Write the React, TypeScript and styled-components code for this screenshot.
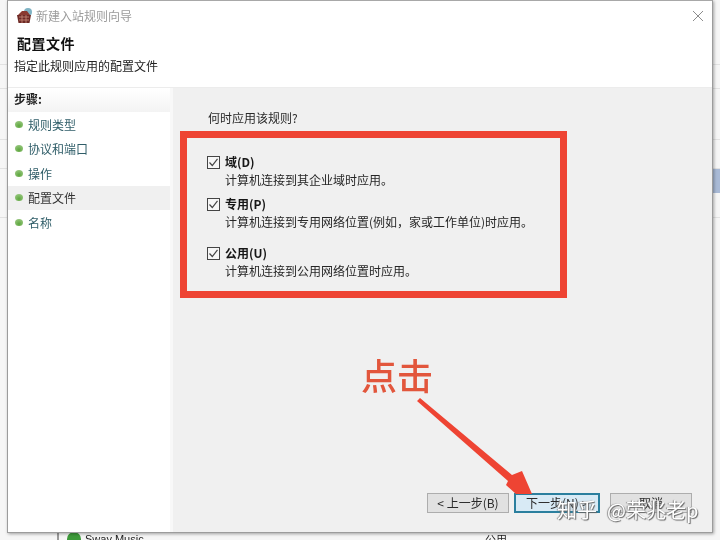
import React from "react";
import styled, { createGlobalStyle } from "styled-components";

const Global = createGlobalStyle`
  html, body { margin: 0; padding: 0; background: #f5f5f5; }
  * { box-sizing: border-box; }
`;

const Page = styled.div`
  position: relative;
  width: 720px;
  height: 540px;
  overflow: hidden;
  background: #f6f6f6;
  font-family: "Noto Sans CJK SC", "Liberation Sans", sans-serif;
  color: #1c1c1c;
  filter: blur(0.35px);
`;

const BackdropRows = styled.div`
  display: flex;
  flex-direction: column;
  align-items: stretch;
  padding-top: 41px;
`;

const BackdropRow = styled.div<{ $selected?: boolean; $height: number }>`
  height: ${(p) => p.$height}px;
  margin-left: ${(p) => (p.$selected ? 700 : 0)}px;
  background: ${(p) => (p.$selected ? "#a9bad6" : "transparent")};
  border-bottom: ${(p) => (p.$selected ? "none" : "1px solid #e2e2e2")};
`;

const BackdropFooter = styled.div`
  position: absolute;
  left: 57px;
  right: 0;
  bottom: 0;
  height: 8px;
  display: flex;
  align-items: flex-start;
  border-left: 2px solid #9a9a9a;
  padding-left: 8px;
  font-size: 11px;
  line-height: 14px;
  overflow: hidden;
`;

const FooterDot = styled.span`
  width: 14px;
  height: 14px;
  flex: none;
  margin-right: 4px;
  border-radius: 50%;
  background: #3d9a3a;
`;

const FooterName = styled.span`
  font-family: "Liberation Sans", sans-serif;
  width: 400px;
`;

const FooterProfile = styled.span`
  width: 60px;
`;

const Dialog = styled.div`
  position: absolute;
  left: 7px;
  top: 0;
  width: 706px;
  height: 533px;
  display: flex;
  flex-direction: column;
  background: #fff;
  border: 1px solid #9c9c9c;
  border-top-color: #a8a8a8;
  box-shadow: 1px 1px 3px rgba(0, 0, 0, 0.35);
`;

const Header = styled.header`
  height: 87px;
  flex: none;
  display: flex;
  flex-direction: column;
  padding: 0 8px 0 6px;
  background: #fff;
  border-bottom: 1px solid #ececec;
`;

const TitleBar = styled.div`
  height: 29px;
  display: flex;
  align-items: center;
  gap: 2px;
  padding-left: 2px;
`;

const TitleText = styled.span`
  font-size: 12px;
  color: #9c9c9c;
  flex: 1;
`;

const HeaderTitle = styled.h1`
  margin: 3px 0 0 3px;
  font-size: 14px;
  line-height: 20px;
  font-weight: 700;
  color: #111;
  letter-spacing: 0.5px;
`;

const HeaderSub = styled.p`
  margin: 4px 0 0;
  font-size: 12px;
  line-height: 18px;
  color: #222;
`;

const Body = styled.div`
  flex: 1;
  display: flex;
  min-height: 0;
`;

const Sidebar = styled.nav`
  width: 162px;
  flex: none;
  background: #fff;
  display: flex;
  flex-direction: column;
`;

const StepsHeading = styled.div`
  height: 24px;
  padding-left: 6px;
  font-size: 12px;
  line-height: 21px;
  font-weight: 700;
  color: #222;
  background: linear-gradient(#ffffff, #f3f3f3);
`;

const StepRow = styled.div<{ $current?: boolean }>`
  height: 24.5px;
  display: flex;
  align-items: center;
  gap: 5px;
  padding-left: 7px;
  font-size: 12px;
  background: ${(p) => (p.$current ? "#f0f0f0" : "transparent")};
  color: ${(p) => (p.$current ? "#333" : "#2f5d68")};
`;

const StepDot = styled.span`
  width: 8px;
  height: 7px;
  border-radius: 50%;
  flex: none;
  background: radial-gradient(circle at 50% 70%, #5da63e, #a5cf8e);
`;

const Divider = styled.div`
  width: 3px;
  flex: none;
  background: #f8f8f8;
`;

const Main = styled.main`
  flex: 1;
  position: relative;
  background: #f0f0f0;
  padding: 21px 0 0 7px;
`;

const Question = styled.div`
  margin-left: 28px;
  font-size: 12px;
  line-height: 18px;
  color: #2a2a2a;
`;

const RedFrame = styled.section`
  width: 387px;
  height: 167px;
  margin-top: 4px;
  border: 7px solid #ee4433;
  display: flex;
  flex-direction: column;
  padding: 15px 0 0 20px;
`;

const Option = styled.div<{ $gap?: number }>`
  display: grid;
  grid-template-columns: 13px 1fr;
  column-gap: 5px;
  margin-top: ${(p) => p.$gap ?? 0}px;
`;

const Check = styled.span`
  width: 13px;
  height: 13px;
  margin-top: 3px;
  border: 1px solid #444;
  background: #f6f6f6;
  display: flex;
  align-items: center;
  justify-content: center;
`;

const OptionText = styled.div`
  display: flex;
  flex-direction: column;
`;

const OptionLabel = styled.span`
  font-size: 12px;
  line-height: 18px;
  font-weight: 700;
  color: #161616;
`;

const OptionHelp = styled.span`
  font-size: 12px;
  line-height: 18px;
  color: #262626;
  white-space: nowrap;
`;

const Buttons = styled.div`
  position: absolute;
  right: 20px;
  bottom: 19px;
  display: flex;
  gap: 5px;
`;

const WizardButton = styled.button<{ $primary?: boolean; $apart?: boolean }>`
  width: ${(p) => (p.$primary ? 86 : 82)}px;
  height: 20px;
  margin-left: ${(p) => (p.$apart ? 5 : 0)}px;
  padding: 0;
  font-family: inherit;
  font-size: 12px;
  line-height: 16px;
  color: #2a2a2a;
  background: ${(p) => (p.$primary ? "#d8eaf5" : "#e1e1e1")};
  border: ${(p) => (p.$primary ? "2px solid #2b7f9e" : "1px solid #adadad")};
`;

const ClickLabel = styled.div`
  position: absolute;
  left: 361px;
  top: 348px;
  font-size: 36px;
  line-height: 52px;
  font-weight: 500;
  color: #e2563c;
`;

const ArrowLayer = styled.svg`
  position: absolute;
  left: 0;
  top: 0;
  pointer-events: none;
`;

const Watermark = styled.div`
  position: absolute;
  left: 557px;
  top: 497px;
  display: flex;
  gap: 10px;
  font-size: 20px;
  line-height: 26px;
  color: #fff;
  white-space: nowrap;
  text-shadow: 1px 1px 1px #666, -1px 0 1px #888;
`;

const steps = ["规则类型", "协议和端口", "操作", "配置文件", "名称"];

const options = [
  { label: "域(D)", help: "计算机连接到其企业域时应用。", gap: 0 },
  { label: "专用(P)", help: "计算机连接到专用网络位置(例如\uFF0C家或工作单位)时应用。", gap: 6 },
  { label: "公用(U)", help: "计算机连接到公用网络位置时应用。", gap: 13 },
];

const backdropRows = [
  { height: 24 },
  { height: 24 },
  { height: 51 },
  { height: 29 },
  { height: 24, selected: true },
  { height: 25 },
];

function WizardIcon() {
  return (
    <svg width="18" height="18" viewBox="0 0 18 18">
      <circle cx="12" cy="5" r="4" fill="#7fb3c4" />
      <path d="M2 8 L6 4 L11 4 L14 8 Z" fill="#8a3a30" />
      <path d="M1 8 H15 L13.5 16 H2.5 Z" fill="#6e2a26" />
      <path d="M3 10 H13 M3 13 H13 M6 8 V16 M10 8 V16" stroke="#c98a7a" strokeWidth="0.8" />
    </svg>
  );
}

function CloseIcon() {
  return (
    <svg width="12" height="12" viewBox="0 0 12 12">
      <path d="M1 1 L11 11 M11 1 L1 11" stroke="#8c8c8c" strokeWidth="1" fill="none" />
    </svg>
  );
}

function Tick() {
  return (
    <svg width="11" height="11" viewBox="0 0 11 11">
      <path d="M1.5 5.5 L4.3 8.5 L9.5 1.8" stroke="#444" strokeWidth="1.2" fill="none" />
    </svg>
  );
}

export default function App() {
  return (
    <Page>
      <Global />
      <BackdropRows>
        {backdropRows.map((r, i) => (
          <BackdropRow key={i} $height={r.height} $selected={r.selected} />
        ))}
      </BackdropRows>
      <BackdropFooter>
        <FooterDot />
        <FooterName>Sway Music</FooterName>
        <FooterProfile>公用</FooterProfile>
      </BackdropFooter>
      <Dialog>
        <Header>
          <TitleBar>
            <WizardIcon />
            <TitleText>新建入站规则向导</TitleText>
            <CloseIcon />
          </TitleBar>
          <HeaderTitle>配置文件</HeaderTitle>
          <HeaderSub>指定此规则应用的配置文件</HeaderSub>
        </Header>
        <Body>
          <Sidebar>
            <StepsHeading>步骤:</StepsHeading>
            {steps.map((s, i) => (
              <StepRow key={s} $current={i === 3}>
                <StepDot />
                {s}
              </StepRow>
            ))}
          </Sidebar>
          <Divider />
          <Main>
            <Question>何时应用该规则?</Question>
            <RedFrame>
              {options.map((o) => (
                <Option key={o.label} $gap={o.gap}>
                  <Check>
                    <Tick />
                  </Check>
                  <OptionText>
                    <OptionLabel>{o.label}</OptionLabel>
                    <OptionHelp>{o.help}</OptionHelp>
                  </OptionText>
                </Option>
              ))}
            </RedFrame>
            <Buttons>
              <WizardButton>&lt; 上一步(B)</WizardButton>
              <WizardButton $primary>下一步(N) &gt;</WizardButton>
              <WizardButton $apart>取消</WizardButton>
            </Buttons>
          </Main>
        </Body>
      </Dialog>
      <ClickLabel>点击</ClickLabel>
      <ArrowLayer width="720" height="540" viewBox="0 0 720 540">
        <path d="M417 401 L420 398 L512 475 L522 471 L532 494 L516 494 L506 485 L508 481 Z" fill="#ee4433" />
      </ArrowLayer>
      <Watermark>
        <span>知乎</span>
        <span>@荣兆老p</span>
      </Watermark>
    </Page>
  );
}
